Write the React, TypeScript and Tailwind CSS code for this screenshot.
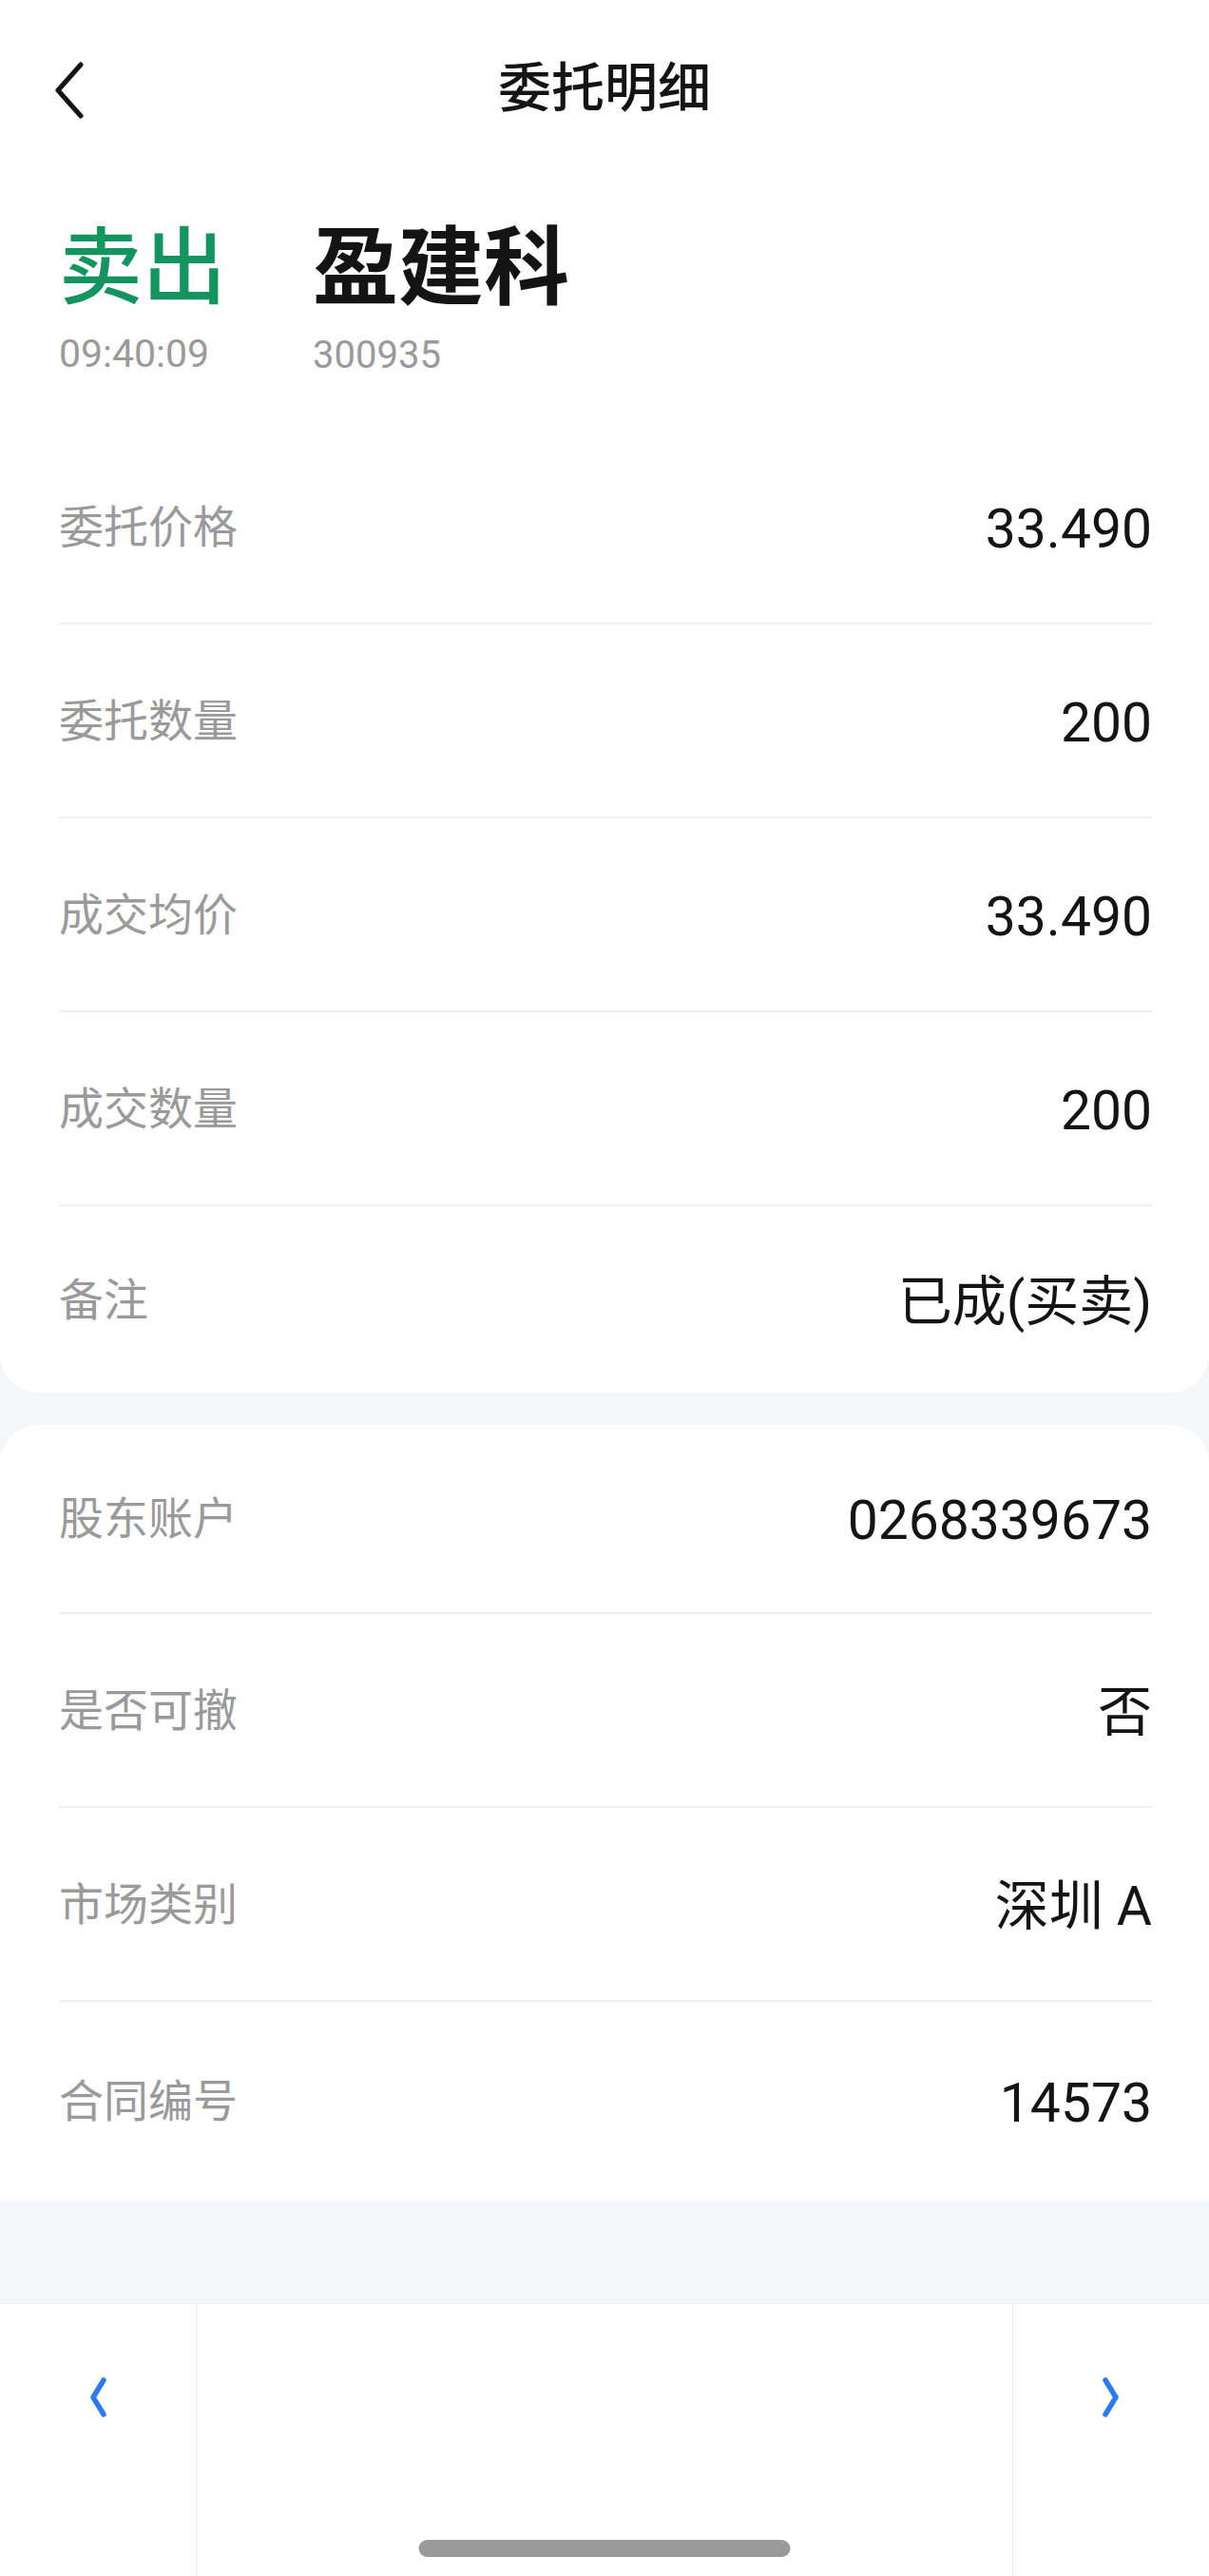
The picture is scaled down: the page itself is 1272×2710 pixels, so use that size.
import React from "react";

const font = { fontFamily: "Roboto, 'Noto Sans CJK SC', sans-serif" };

type Row = { label: string; value: string };

const orderRows: Row[] = [
  { label: "委托价格", value: "33.490" },
  { label: "委托数量", value: "200" },
  { label: "成交均价", value: "33.490" },
  { label: "成交数量", value: "200" },
  { label: "备注", value: "已成(买卖)" },
];

const accountRows: Row[] = [
  { label: "股东账户", value: "0268339673" },
  { label: "是否可撤", value: "否" },
  { label: "市场类别", value: "深圳 A" },
  { label: "合同编号", value: "14573" },
];

const DetailRow = ({ row, className }: { row: Row; className: string }) => (
  <div className={`flex items-center justify-between ${className}`}>
    <span className="text-[47px] leading-none text-[#9a9a9a]">{row.label}</span>
    <span className="mt-[4px] text-[57px] leading-none text-[#141414]">{row.value}</span>
  </div>
);

const Chevron = ({ dir, className }: { dir: "left" | "right"; className?: string }) => (
  <svg width="18" height="42" viewBox="0 0 18 42" className={className}>
    <polyline
      points={dir === "left" ? "15,3 4,21 15,39" : "3,3 14,21 3,39"}
      fill="none"
      stroke="#2b7bf0"
      strokeWidth="5.5"
      strokeLinecap="round"
      strokeLinejoin="round"
    />
  </svg>
);

const App = () => {
  return (
    <div className="relative w-[1272px] min-h-[2710px] bg-[#f4f7fa]" style={font}>
      {/* order card */}
      <div className="bg-white rounded-b-[40px]">
        <div className="relative h-[186px] flex items-center justify-center">
          <svg
            width="32"
            height="60"
            viewBox="0 0 32 60"
            className="absolute left-[57px] top-[65px]"
          >
            <polyline
              points="28,3 4,30 28,57"
              fill="none"
              stroke="#141414"
              strokeWidth="5"
              strokeLinecap="round"
              strokeLinejoin="round"
            />
          </svg>
          <h1 className="text-[56px] leading-none font-medium text-[#141414]">委托明细</h1>
        </div>

        <div className="h-[267px] pt-[52px] px-[62px] flex">
          <div className="w-[267px]">
            <div className="text-[88px] leading-none font-medium text-[#14955f]">卖出</div>
            <div className="mt-[26px] text-[41px] leading-none text-[#9a9a9a]">09:40:09</div>
          </div>
          <div>
            <div className="text-[90px] leading-none font-bold text-[#141414]">盈建科</div>
            <div className="mt-[26px] text-[40px] leading-none text-[#9a9a9a]">300935</div>
          </div>
        </div>

        <div className="ml-[62px] mr-[60px]">
          {orderRows.map((r, i) => (
            <DetailRow
              key={r.label}
              row={r}
              className={
                i < orderRows.length - 1
                  ? "h-[204px] border-b-2 border-[#efefef]"
                  : "h-[196px]"
              }
            />
          ))}
        </div>
      </div>

      {/* account card */}
      <div className="mt-[34px] bg-white rounded-t-[40px]">
        <div className="ml-[62px] mr-[60px]">
          {accountRows.map((r, i) => (
            <DetailRow
              key={r.label}
              row={r}
              className={
                i === 0
                  ? "h-[199px] border-b-2 border-[#efefef]"
                  : i < accountRows.length - 1
                  ? "h-[204px] border-b-2 border-[#efefef]"
                  : "h-[209px]"
              }
            />
          ))}
        </div>
      </div>

      <div className="h-[108px]" />

      {/* bottom pager */}
      <div className="h-[287px] bg-white border-t border-[#ebedf0] grid grid-cols-[207px_1fr_207px]">
        <div className="flex justify-center pt-[77px] border-r border-[#f0f0f0]">
          <Chevron dir="left" />
        </div>
        <div />
        <div className="flex justify-center pt-[77px] border-l border-[#f0f0f0]">
          <Chevron dir="right" />
        </div>
      </div>

      <div className="absolute bottom-[20px] left-1/2 -translate-x-1/2 w-[391px] h-[18px] rounded-full bg-[#9a9a9a]" />
    </div>
  );
};

export default App;
